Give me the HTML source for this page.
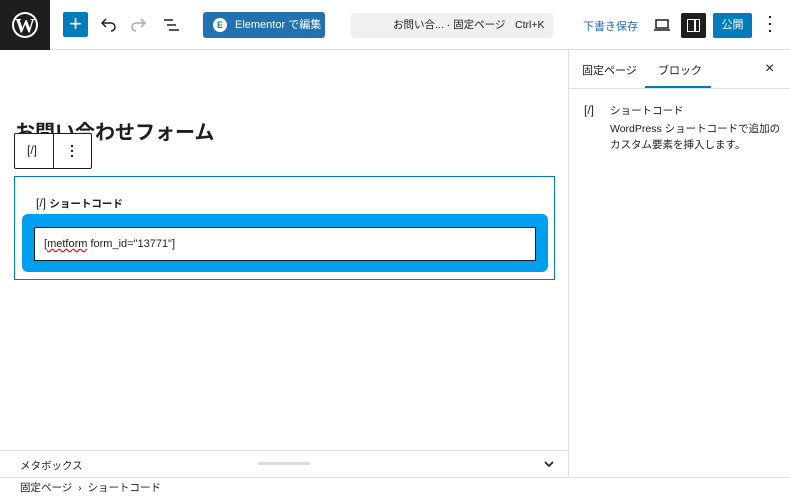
<!DOCTYPE html><html><head><meta charset="utf-8"><style>
*{box-sizing:border-box;margin:0;padding:0}
body{width:790px;height:496px;overflow:hidden;background:#fff;font-family:"Liberation Sans","Noto Sans CJK JP",sans-serif;color:#1e1e1e;position:relative}
.a{position:absolute;white-space:nowrap}
</style></head><body>
<div class="a" style="left:0;top:0;width:790px;height:50px;border-bottom:1px solid #e0e0e0"></div>
<div class="a" style="left:0;top:0;width:50px;height:50px;background:#1e1e1e">
<svg width="50" height="50" viewBox="0 0 50 50"><circle cx="25" cy="25" r="13" fill="#fff"/><circle cx="25" cy="25" r="11" fill="#1e1e1e"/><text x="25" y="32" text-anchor="middle" font-family="Liberation Serif" font-size="20" font-weight="bold" fill="#fff">W</text></svg></div>
<div class="a" style="left:63px;top:12px;width:25px;height:25px;background:#007cba;border-radius:2px;color:#fff;font-size:22px;line-height:24px;text-align:center">+</div>
<svg class="a" style="left:98px;top:15px" width="20" height="20" viewBox="0 0 20 20"><path d="M5 8h8a4 4 0 0 1 0 8" fill="none" stroke="#1e1e1e" stroke-width="1.5"/><path d="M8 4L4 8l4 4" fill="none" stroke="#1e1e1e" stroke-width="1.5"/></svg>
<svg class="a" style="left:129px;top:15px" width="20" height="20" viewBox="0 0 20 20"><path d="M15 8H7a4 4 0 0 0 0 8" fill="none" stroke="#aaa" stroke-width="1.5"/><path d="M12 4l4 4-4 4" fill="none" stroke="#aaa" stroke-width="1.5"/></svg>
<svg class="a" style="left:161px;top:15px" width="20" height="20" viewBox="0 0 20 20"><path d="M3 5h9M6 10h9M8 15h10" stroke="#1e1e1e" stroke-width="1.6"/></svg>
<div class="a" style="left:203px;top:12px;width:122px;height:26px;background:#2271b1;border-radius:3px;color:#fff;font-size:11px;line-height:26px;padding-left:32px">Elementor で編集</div>
<div class="a" style="left:213px;top:18px;width:14px;height:14px;border-radius:50%;background:#fff;color:#2271b1;font-size:9px;line-height:14px;text-align:center;font-weight:bold">E</div>
<div class="a" style="left:351px;top:13px;width:202px;height:25px;background:#f0f0f0;border-radius:3px"></div>
<div class="a" style="left:393px;top:13px;font-size:10.5px;line-height:25px">お問い合... · 固定ページ</div>
<div class="a" style="left:515px;top:13px;font-size:10.5px;line-height:25px">Ctrl+K</div>
<div class="a" style="left:583px;top:18px;font-size:11px;color:#2271b1">下書き保存</div>
<svg class="a" style="left:652px;top:15px" width="20" height="20" viewBox="0 0 20 20"><rect x="4" y="5" width="12" height="8" fill="none" stroke="#1e1e1e" stroke-width="1.5"/><path d="M2 15h16" stroke="#1e1e1e" stroke-width="1.5"/></svg>
<div class="a" style="left:681px;top:13px;width:25px;height:25px;background:#1e1e1e;border-radius:2px"><div class="a" style="left:6px;top:6px;width:13px;height:13px;border:1.5px solid #fff"></div><div class="a" style="left:13px;top:6px;width:1.5px;height:13px;background:#fff"></div></div>
<div class="a" style="left:713px;top:13px;width:39px;height:25px;background:#007cba;border-radius:2px;color:#fff;font-size:11px;line-height:25px;text-align:center">公開</div>
<div class="a" style="left:769px;top:16px;width:2px;height:2px;background:#1e1e1e"></div>
<div class="a" style="left:769px;top:23px;width:2px;height:2px;background:#1e1e1e"></div>
<div class="a" style="left:769px;top:30px;width:2px;height:2px;background:#1e1e1e"></div>
<!-- sidebar -->
<div class="a" style="left:568px;top:50px;width:1px;height:428px;background:#e0e0e0"></div>
<div class="a" style="left:569px;top:88px;width:221px;height:1px;background:#e0e0e0"></div>
<div class="a" style="left:582px;top:62px;font-size:11px">固定ページ</div>
<div class="a" style="left:658px;top:62px;font-size:11px">ブロック</div>
<div class="a" style="left:645px;top:86px;width:66px;height:2px;background:#007cba"></div>
<div class="a" style="left:765px;top:60px;font-size:16px">×</div>
<div class="a" style="left:584px;top:103px;font-size:12px">[/]</div>
<div class="a" style="left:610px;top:103px;font-size:10.5px">ショートコード</div>
<div class="a" style="left:610px;top:121px;font-size:10.5px;line-height:16px">WordPress ショートコードで追加の<br>カスタム要素を挿入します。</div>
<!-- editor -->
<div class="a" style="left:15px;top:116px;font-size:20px;font-weight:bold">お問い合わせフォーム</div>
<div class="a" style="left:14px;top:133px;width:78px;height:36px;background:#fff;border:1px solid #1e1e1e;border-radius:2px"><div class="a" style="left:38px;top:0;width:1px;height:34px;background:#1e1e1e"></div><div class="a" style="left:12px;top:9px;font-size:12px">[/]</div><div class="a" style="left:56px;top:11px;width:2px;height:2px;background:#1e1e1e"></div><div class="a" style="left:56px;top:16px;width:2px;height:2px;background:#1e1e1e"></div><div class="a" style="left:56px;top:21px;width:2px;height:2px;background:#1e1e1e"></div></div>
<div class="a" style="left:14px;top:176px;width:541px;height:104px;border:1px solid #007cba"></div>
<div class="a" style="left:36px;top:196px;font-size:12px">[/] <b style="font-size:10.5px">ショートコード</b></div>
<div class="a" style="left:22px;top:214px;width:526px;height:58px;background:#00a0f0;border-radius:6px"></div>
<div class="a" style="left:34px;top:227px;width:502px;height:34px;background:#fff;border:1px solid #1e1e1e;font-size:11px;line-height:32px;padding-left:9px">[<span style="text-decoration:underline wavy red">metform</span> form_id="13771"]</div>
<div class="a" style="left:0;top:450px;width:568px;height:1px;background:#e0e0e0"></div>
<div class="a" style="left:20px;top:458px;font-size:10.5px">メタボックス</div>
<div class="a" style="left:258px;top:462px;width:52px;height:3px;background:#ddd;border-radius:2px"></div>
<svg class="a" style="left:544px;top:460px" width="10" height="8" viewBox="0 0 10 8"><path d="M1 2l4 4 4-4" fill="none" stroke="#1e1e1e" stroke-width="1.6"/></svg>
<div class="a" style="left:0;top:477px;width:790px;height:1px;background:#e0e0e0"></div>
<div class="a" style="left:20px;top:480px;font-size:10.5px">固定ページ &nbsp;› &nbsp;ショートコード</div>
</body></html>
